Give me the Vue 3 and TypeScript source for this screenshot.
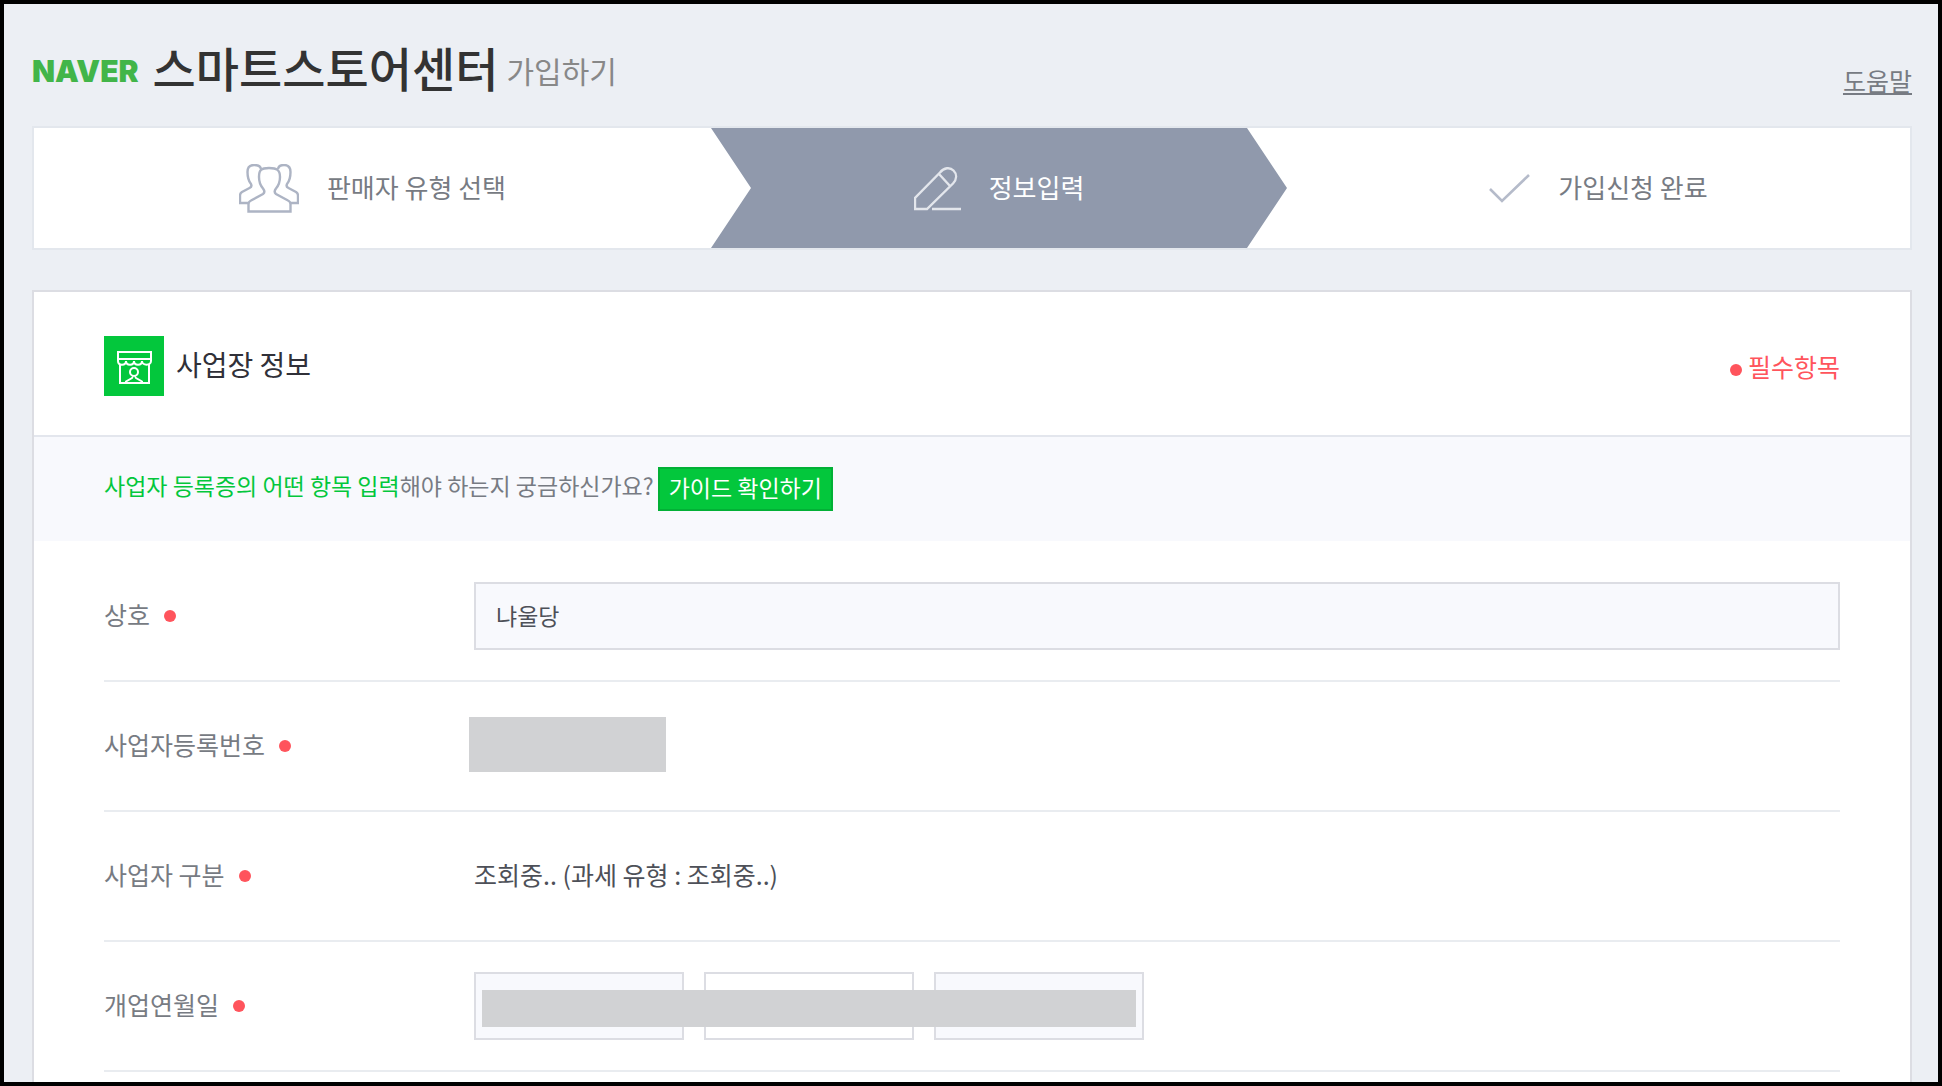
<script setup lang="ts">
interface Step { key: string; label: string; current?: boolean }

const steps: Step[] = [
  { key: 'type', label: '판매자 유형 선택' },
  { key: 'info', label: '정보입력', current: true },
  { key: 'done', label: '가입신청 완료' },
]
const dateParts = [
  { id: 'open-year', name: '년' },
  { id: 'open-month', name: '월', editable: true },
  { id: 'open-day', name: '일' },
]
</script>

<template>
  <div class="page">
    <header class="top">
      <h1 class="brand">
        <span class="naver">NAVER</span>
        <span class="center-name">스마트스토어센터</span>
        <span class="join">가입하기</span>
      </h1>
      <a class="help" href="#help">도움말</a>
    </header>

    <ol class="steps">
      <li v-for="s in steps" :key="s.key" class="step" :class="{ current: s.current }">
        <svg v-if="s.key === 'type'" width="60" height="50" viewBox="0 0 60 50" fill="none" stroke="#adb4c4" stroke-width="2.4">
          <path d="M24 30C26 28.500 25.500 26.500 24 24.500C21 21 20 18 20 13C20 6 22 4 30 4S41 6 41 13C41 18 40 21 37 24.500C35.500 26.500 35 28.500 37 30L49 36.500C51 37.500 51.500 38 51.500 40V47.500H9.500V40C9.500 38 10 37.500 12 36.500Z" />
          <path d="M22 5C21.500 2 19 1 15 1C10 1 8.500 4 8.500 8C8.500 14 9.500 17 12 20C13 22 12.500 23 10.500 24L3 28C1.500 29 1 30 1 31.500V39H9" />
          <path d="M39 5C39.500 2 41 1 45 1C50 1 51.500 4 51.500 8C51.500 14 50.500 17 48 20C47 22 47.500 23 49.500 24L57 28C58.500 29 59 30 59 31.500V39H52" />
        </svg>
        <svg v-else-if="s.key === 'info'" width="47" height="44" viewBox="0 0 47 44" fill="none" stroke="#e3e6ec" stroke-width="2.4">
          <path d="M1 42V31L26 5.500C30 0.500 36 0 39.500 3.500C43 7 43 12 39 16.500L13 42ZM25 7L36 19M18 42H47" />
        </svg>
        <svg v-else width="41" height="30" viewBox="0 0 41 30" fill="none" stroke="#b5bbca" stroke-width="2.6">
          <path d="M1 15L13 27L40 1" />
        </svg>
        <span class="step-label">{{ s.label }}</span>
      </li>
    </ol>

    <main class="card">
      <div class="card-head">
        <svg class="store" width="60" height="60" viewBox="0 0 60 60" fill="none" stroke="#fff" stroke-width="2">
          <rect width="60" height="60" fill="#03c73c" stroke="none" />
          <path d="M14 16H47V23H14ZM14 23V25C14 30 22 30 22 25C22 30 30 30 30 25C30 30 38 30 38 25C38 30 47 30 47 25V23M16 28V47H45V28M22 47V45.500L28 42C28.500 41.500 28.500 41 28 40.500M38 47V45.500L32 42C31.500 41.500 31.500 41 32 40.500" />
          <circle cx="30" cy="36" r="4" />
        </svg>
        <h2>사업장 정보</h2>
        <p class="required-note"><i class="dot"></i>필수항목</p>
      </div>

      <div class="guide">
        <p><em>사업자 등록증의 어떤 항목 입력</em>해야 하는지 궁금하신가요?</p>
        <button type="button">가이드 확인하기</button>
      </div>

      <form class="form">
        <div class="row">
          <label class="label" for="company"><span>상호</span><i class="dot"></i></label>
          <input id="company" class="field wide" type="text" value="냐울당" readonly />
        </div>
        <div class="row">
          <span class="label"><span>사업자등록번호</span><i class="dot"></i></span>
          <span class="mask number-mask"></span>
        </div>
        <div class="row">
          <span class="label"><span>사업자 구분</span><i class="dot"></i></span>
          <span class="value">조회중.. (과세 유형 : 조회중..)</span>
        </div>
        <div class="row">
          <span class="label"><span>개업연월일</span><i class="dot"></i></span>
          <div class="dates">
            <input
              v-for="d in dateParts"
              :id="d.id"
              :key="d.id"
              class="field date"
              :class="{ editable: d.editable }"
              type="text"
              :aria-label="d.name"
              :readonly="!d.editable"
            />
            <span class="mask date-mask"></span>
          </div>
        </div>
      </form>
    </main>
  </div>
</template>

<style>
body { background: #eceff4; }
</style>

<style scoped>
.page {
  box-sizing: border-box;
  height: 100vh;
  overflow: hidden;
  padding: 0 26px 0 28px;
  border: 4px solid #000;
  background: #eceff4;
  color: #777b83;
  font-family: "Noto Sans CJK KR", "Noto Sans", sans-serif;
  font-size: 25px;
  line-height: 36px;
}
h1, h2, p, ol { margin: 0; padding: 0; font-weight: 400; }
.top {
  display: flex;
  justify-content: space-between;
  align-items: center;
  box-sizing: border-box;
  height: 122px;
  padding-top: 12px;
}
.brand { display: flex; align-items: center; line-height: 64px; }
.naver {
  margin-right: 14px;
  color: #42b549;
  font-family: Inter, sans-serif;
  font-size: 30px;
  font-weight: 900;
}
.center-name { margin-right: 8px; padding-bottom: 8px; color: #333; font-size: 47px; font-weight: 500; }
.join { padding-bottom: 2px; color: #888; font-size: 30px; }
.help { align-self: flex-end; margin-bottom: 28px; color: #777b83; text-decoration: underline; }
.steps {
  display: grid;
  grid-template-columns: 677fr 576fr 623fr;
  border: 2px solid #e3e7ed;
  background: #fff;
  list-style: none;
  font-size: 26px;
}
.step { display: flex; justify-content: center; align-items: center; gap: 28px; height: 120px; }
.step svg { margin-top: 2px; }
.step-label { padding-bottom: 2px; }
.step.current {
  background: #9099ac;
  color: #fff;
  clip-path: polygon(0 0, calc(100% - 40px) 0, 100% 50%, calc(100% - 40px) 100%, 0 100%, 40px 50%);
}
.card { margin-top: 40px; border: 2px solid #dcdde3; background: #fff; }
.card-head {
  display: flex;
  align-items: center;
  gap: 12px;
  padding: 44px 70px 39px;
  border-bottom: 2px solid #e3e6ed;
}
h2 { padding-bottom: 4px; color: #303038; font-size: 28px; }
.required-note { display: flex; align-items: center; gap: 6px; margin-left: auto; color: #ff545c; }
.dot { width: 12px; height: 12px; border-radius: 50%; background: #ff545c; }
.required-note .dot { margin-top: 8px; }
.guide {
  display: flex;
  align-items: flex-start;
  gap: 4px;
  padding: 30px 70px;
  background: #f8f9fd;
  font-size: 23px;
}
.guide em { color: #03c73c; font-style: normal; }
.guide button {
  height: 44px;
  padding: 0 9px 4px;
  border: 2px solid #02b036;
  background: #03c73c;
  color: #fff;
  font: inherit;
}
.form { padding: 11px 70px 40px; }
.row {
  display: flex;
  align-items: center;
  height: 128px;
  border-bottom: 2px solid #e9ecf0;
}
.label { display: flex; align-items: center; gap: 14px; flex: 0 0 370px; }
.label span, .value { padding-bottom: 4px; }
.value { color: #4d5058; }
.field {
  box-sizing: border-box;
  height: 68px;
  padding: 0 20px 2px;
  border: 2px solid #dcdde3;
  border-radius: 0;
  background: #f8f9fd;
  color: #4d5058;
  font: inherit;
  font-size: 23px;
}
.wide { flex: 1; min-width: 0; }
.dates { position: relative; display: flex; gap: 20px; }
.date { width: 210px; }
.field.editable { background: #fff; }
.mask { background: #d1d2d4; }
.number-mask { width: 197px; height: 55px; margin: 0 0 4px -5px; }
.date-mask { position: absolute; top: 18px; right: 8px; left: 8px; height: 37px; }
</style>
